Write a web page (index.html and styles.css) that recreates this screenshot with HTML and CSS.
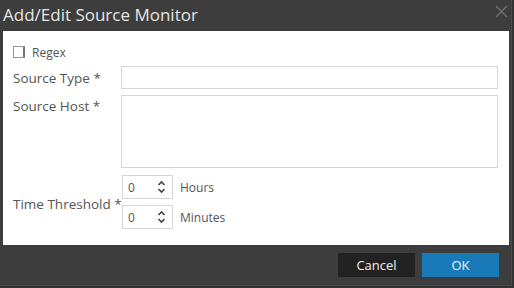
FILE: index.html
```html
<!DOCTYPE html>
<html lang="en">
<head>
    <meta charset="UTF-8">
    <title>Add/Edit Source Monitor</title>
    <link rel="stylesheet" href="styles.css">
</head>
<body>

<div class="dialog">
    <div class="titlebar">
        <span class="title">Add/Edit Source Monitor</span>
        <svg class="close" width="13" height="13" viewBox="0 0 13 13">
            <path d="M1 1 L12 12 M12 1 L1 12" stroke="#6a6a6a" stroke-width="1.6" fill="none"/>
        </svg>
    </div>

    <div class="body">
        <label class="check-row">
            <span class="checkbox"></span>
            <span>Regex</span>
        </label>

        <div class="form">
            <label class="field-label">Source Type *</label>
            <input type="text" class="text-input">

            <label class="field-label top">Source Host *</label>
            <textarea class="text-area"></textarea>

            <label class="field-label low">Time Threshold *</label>
            <div class="threshold">
                <div class="spin-row">
                    <div class="spinner">
                        <span>0</span>
                        <svg width="9" height="16" viewBox="0 0 9 16">
                            <path d="M1.5 6 L4.5 3 L7.5 6 M1.5 10 L4.5 13 L7.5 10" stroke="#444" stroke-width="1.6" fill="none"/>
                        </svg>
                    </div>
                    <span class="unit">Hours</span>
                </div>
                <div class="spin-row">
                    <div class="spinner">
                        <span>0</span>
                        <svg width="9" height="16" viewBox="0 0 9 16">
                            <path d="M1.5 6 L4.5 3 L7.5 6 M1.5 10 L4.5 13 L7.5 10" stroke="#444" stroke-width="1.6" fill="none"/>
                        </svg>
                    </div>
                    <span class="unit">Minutes</span>
                </div>
            </div>
        </div>
    </div>

    <div class="footer">
        <button class="btn cancel">Cancel</button>
        <button class="btn ok">OK</button>
    </div>
</div>

</body>
</html>
```

FILE: styles.css
```css
body {
    margin: 0;
    background-color: #333;
    font-family: 'Open Sans', sans-serif;
}

.dialog {
    width: 511px;
    height: 285px;
    background-color: #3d3d3d;
    border-right: 1px solid #4a4a4a;
    border-bottom: 1px solid #4a4a4a;
}

.titlebar {
    height: 31px;
    display: flex;
    align-items: center;
    justify-content: space-between;
    padding: 0 3px 0 3px;
}

.title {
    color: #e6e6e6;
    font-size: 17px;
    margin-top: -2px;
}

.close {
    margin-top: -8px;
}

.body {
    background-color: #ffffff;
    margin: 0 2px 0 3px;
    height: 214px;
    box-sizing: border-box;
    padding: 15px 11px 0 10px;
}

.check-row {
    display: flex;
    align-items: center;
    gap: 7px;
    font-size: 12px;
    color: #555;
    height: 12px;
}

.checkbox {
    width: 9px;
    height: 10px;
    border: 1px solid #999;
    border-right: 2px solid #777;
    background-color: #fff;
}

.form {
    display: grid;
    grid-template-columns: 108px 1fr;
    row-gap: 6px;
    margin-top: 8px;
    align-items: center;
}

.field-label {
    font-size: 13.5px;
    color: #555;
    white-space: nowrap;
}

.field-label.top {
    align-self: start;
    margin-top: 2px;
}

.field-label.low {
    margin-top: 4px;
}

.text-input, .text-area {
    box-sizing: border-box;
    width: 100%;
    border: 1px solid #d6d6d6;
    margin: 0;
    font-family: inherit;
    outline: none;
}

.text-input {
    height: 23px;
}

.text-area {
    height: 73px;
    resize: none;
    display: block;
}

.threshold {
    display: flex;
    flex-direction: column;
    gap: 6px;
    margin-top: 1px;
    margin-left: 1px;
}

.spin-row {
    display: flex;
    align-items: center;
    gap: 7px;
}

.spinner {
    box-sizing: border-box;
    width: 51px;
    height: 24px;
    border: 1px solid #d6d6d6;
    display: flex;
    align-items: center;
    justify-content: space-between;
    padding: 0 6px 0 5px;
    font-size: 12px;
    color: #555;
    background-color: #fff;
}

.unit {
    font-size: 12px;
    color: #555;
}

.footer {
    display: flex;
    justify-content: flex-end;
    gap: 7px;
    padding: 8px 12px 0 0;
}

.btn {
    width: 77px;
    height: 24px;
    border: none;
    font-family: inherit;
    font-size: 13px;
    color: #f0f0f0;
    cursor: pointer;
}

.cancel {
    background-color: #222222;
}

.ok {
    background-color: #1a7ab8;
}
```
